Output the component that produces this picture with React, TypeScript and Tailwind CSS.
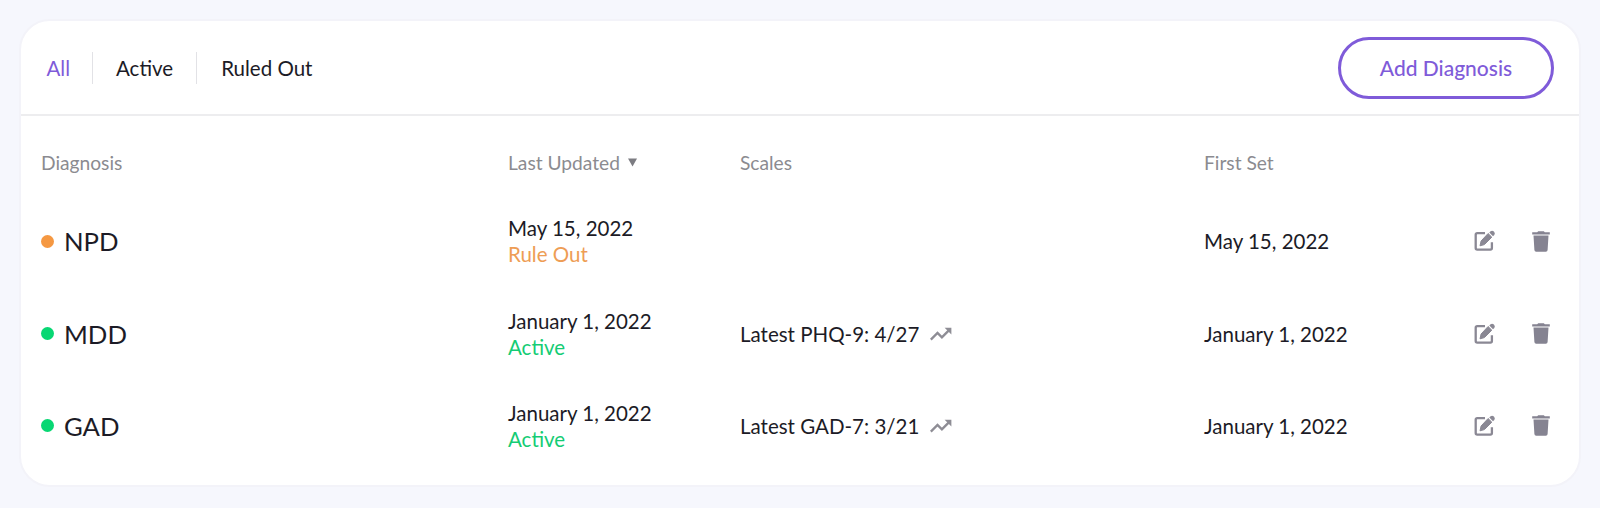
import React from "react";

type Status = "Rule Out" | "Active";

interface Diagnosis {
  name: string;
  status: Status;
  updated: string;
  scale?: string;
  firstSet: string;
}

const diagnoses: Diagnosis[] = [
  { name: "NPD", status: "Rule Out", updated: "May 15, 2022", firstSet: "May 15, 2022" },
  { name: "MDD", status: "Active", updated: "January 1, 2022", scale: "Latest PHQ-9: 4/27", firstSet: "January 1, 2022" },
  { name: "GAD", status: "Active", updated: "January 1, 2022", scale: "Latest GAD-7: 3/21", firstSet: "January 1, 2022" },
];

const dotColor: Record<Status, string> = {
  "Rule Out": "bg-[#f59842]",
  Active: "bg-[#08d773]",
};

const textColor: Record<Status, string> = {
  "Rule Out": "text-[#ee9d55]",
  Active: "text-[#14cc74]",
};

function EditIcon() {
  return (
    <svg width="22" height="22" viewBox="0 0 22 22" fill="none">
      <path d="M11 3.2H3.2Q1.7 3.2 1.7 4.7V18.1Q1.7 19.6 3.2 19.6H16.4Q17.9 19.6 17.9 18.1V12.2" stroke="#8a8894" strokeWidth="2.3" />
      <path d="M14.1 3.5L17.8 7.2L10.4 14.6L6 15.8L7.1 11Z" fill="#8a8894" stroke="#8a8894" strokeWidth="1" strokeLinejoin="round" />
      <path d="M15.3 2.6L16.6 1.3Q18.2 0.1 19.9 1.6Q21.6 3.2 20.3 4.9L19 6.2Z" fill="#8a8894" />
    </svg>
  );
}

function TrashIcon() {
  return (
    <svg width="18" height="21" viewBox="0 0 18 21" fill="#858391">
      <path d="M0.2 1.3H5.2L6.2 0.3H11.8L12.8 1.3H17.8V3.6H0.2Z" />
      <path d="M1.5 4.4H16.5L15.6 18.9Q15.5 20.7 13.8 20.7H4.2Q2.5 20.7 2.4 18.9Z" />
    </svg>
  );
}

function TrendIcon() {
  return (
    <svg width="22" height="14" viewBox="0 0 22 14" fill="none">
      <path d="M0.8 12.6L7.5 5.9L11.9 10.3L18.6 3.6" stroke="#8e8d95" strokeWidth="2.4" />
      <path d="M14.6 0.8H21.4V7.6Z" fill="#8e8d95" />
    </svg>
  );
}

const columns = "grid grid-cols-[467px_232px_464px_1fr]";

export default function App() {
  return (
    <main className="h-[508px] w-[1600px] bg-[#f6f7fd] px-[19px] pt-[19px] font-['Lato',sans-serif] text-[20.5px] leading-[26px] text-[#1c1b26]">
      <section className="h-[468px] rounded-[31px] border-2 border-[#f3f3f9] bg-white">
        <header className="flex h-[95px] items-center justify-between border-b-2 border-[#ededef] pr-[25px] pl-[25.5px]">
          <nav className="flex items-center">
            <button className="text-[#7f5bd9]">All</button>
            <span className="mr-[23px] ml-[22px] h-8 w-px bg-[#e2e2e6]" />
            <button>Active</button>
            <span className="mr-[24px] ml-[23px] h-8 w-px bg-[#e2e2e6]" />
            <button>Ruled Out</button>
          </nav>
          <button className="h-[62px] w-[216px] rounded-full border-3 border-[#7f5bd9] text-[21px] font-medium text-[#7f5bd9]">
            Add Diagnosis
          </button>
        </header>

        <div className={`${columns} mt-[33.5px] pl-5 text-[19.2px] text-[#8b8b90]`}>
          <span>Diagnosis</span>
          <span className="flex items-center">
            Last Updated
            <svg className="ml-2" width="9" height="9" viewBox="0 0 9 9" fill="#7c7c82">
              <path d="M0 0.5H9L4.5 8.5Z" />
            </svg>
          </span>
          <span>Scales</span>
          <span>First Set</span>
        </div>

        <div className="mt-[19.7px]">
          {diagnoses.map((d) => (
            <article key={d.name} className={`${columns} h-[92.3px] items-center pl-5`}>
              <div className="flex items-center text-[25.7px]">
                <span className={`mr-[10px] size-[13px] rounded-full ${dotColor[d.status]}`} />
                {d.name}
              </div>
              <div>
                <p>{d.updated}</p>
                <p className={textColor[d.status]}>{d.status}</p>
              </div>
              <div className="flex items-center">
                {d.scale && (
                  <>
                    <span className="mr-[11px]">{d.scale}</span>
                    <TrendIcon />
                  </>
                )}
              </div>
              <div className="flex items-center justify-between pr-[29px]">
                <span>{d.firstSet}</span>
                <span className="flex items-center gap-[36px]">
                  <button aria-label="Edit"><EditIcon /></button>
                  <button aria-label="Delete"><TrashIcon /></button>
                </span>
              </div>
            </article>
          ))}
        </div>
      </section>
    </main>
  );
}
